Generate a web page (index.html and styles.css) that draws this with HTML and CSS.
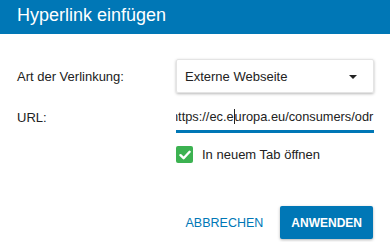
FILE: index.html
```html
<!DOCTYPE html>
<html lang="de">
<head>
<meta charset="utf-8">
<title>Hyperlink einfügen</title>
<link rel="stylesheet" href="styles.css">
</head>
<body>
<div class="dialog">
  <div class="header">Hyperlink einfügen</div>
  <div class="form">
    <div class="label">Art der Verlinkung:</div>
    <div class="select">
      <span>Externe Webseite</span>
      <span class="caret"></span>
    </div>
    <div class="label label-url">URL:</div>
    <div class="input">
      <div class="input-text"><span class="scroll">https://ec.e<span class="cursor"></span>uropa.eu/consumers/odr</span></div>
    </div>
    <div class="spacer"></div>
    <label class="check">
      <span class="box">
        <svg width="12" height="10" viewBox="0 0 12 10"><path d="M1.5 5.2 L4.6 8.2 L10.6 1.8" fill="none" stroke="#fff" stroke-width="2.4" stroke-linecap="round" stroke-linejoin="round"/></svg>
      </span>
      <span>In neuem Tab öffnen</span>
    </label>
  </div>
  <div class="actions">
    <button class="btn btn-text">ABBRECHEN</button>
    <button class="btn btn-primary">ANWENDEN</button>
  </div>
</div>
</body>
</html>
```
FILE: styles.css
```css
html, body {
  margin: 0;
  padding: 0;
  background: #fff;
}
body {
  width: 390px;
  height: 242px;
  overflow: hidden;
  font-family: "Liberation Sans", Arial, sans-serif;
  color: #222;
}
.header {
  height: 34px;
  box-sizing: border-box;
  padding: 5px 0 0 17px;
  background: #0077b6;
  color: #fff;
  font-size: 18px;
  line-height: 20px;
}
.form {
  display: grid;
  grid-template-columns: 159px 198px;
  padding: 25px 0 0 17px;
  align-items: center;
}
.label {
  font-size: 13px;
  color: #222;
}
.select {
  height: 34px;
  box-sizing: border-box;
  border: 1px solid #e4e4e4;
  box-shadow: 0 1px 3px rgba(0,0,0,0.28);
  border-radius: 2px;
  display: flex;
  align-items: center;
  justify-content: space-between;
  padding: 0 16px 0 8px;
  font-size: 13px;
  color: #222;
}
.caret {
  width: 0;
  height: 0;
  border-left: 4px solid transparent;
  border-right: 4px solid transparent;
  border-top: 4px solid #222;
  margin-top: 1px;
}
.label-url {
  margin-top: 10px;
  align-self: start;
  padding-top: 7px;
}
.input {
  margin-top: 10px;
  height: 30px;
  box-sizing: border-box;
  border-bottom: 3px solid #0077b6;
  display: flex;
  align-items: center;
  overflow: hidden;
}
.input-text {
  overflow: hidden;
  white-space: nowrap;
  font-size: 12.8px;
  width: 100%;
}
.scroll {
  display: inline-block;
  margin-left: -5px;
}
.cursor {
  display: inline-block;
  width: 1px;
  height: 15px;
  background: #222;
  vertical-align: -3px;
}
.check {
  display: flex;
  align-items: center;
  gap: 9px;
  margin-top: 13px;
  font-size: 13px;
  color: #222;
}
.box {
  width: 17px;
  height: 17px;
  border-radius: 2px;
  background: #3cb251;
  display: flex;
  align-items: center;
  justify-content: center;
}
.actions {
  display: flex;
  justify-content: flex-end;
  align-items: center;
  gap: 9px;
  padding: 43px 17px 0 0;
}
.btn {
  font-family: "Liberation Sans", Arial, sans-serif;
  font-size: 12.5px;
  border: none;
  border-radius: 2px;
  height: 33px;
  padding: 0 8px;
  cursor: pointer;
}
.btn-text {
  background: transparent;
  color: #0077b6;
}
.btn-primary {
  background: #0077b6;
  color: #fff;
  font-weight: bold;
  font-size: 12px;
  padding: 0 11px;
  box-shadow: 0 1px 3px rgba(0,0,0,0.3);
}
```
